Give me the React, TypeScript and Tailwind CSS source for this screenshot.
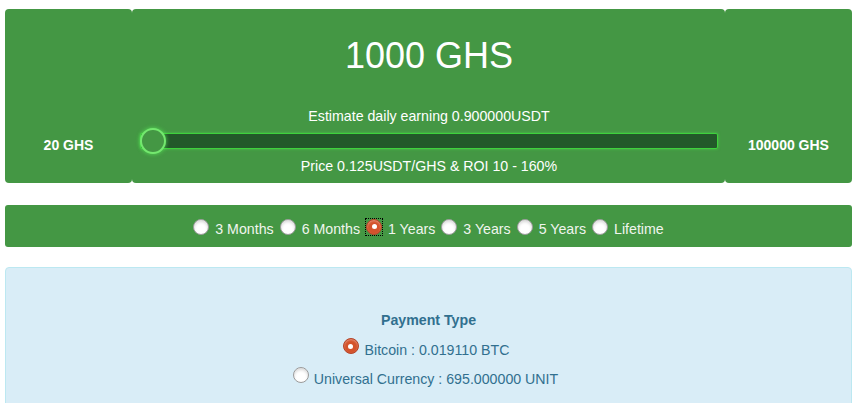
import React from 'react';

const periods = ['3 Months', '6 Months', '1 Years', '3 Years', '5 Years', 'Lifetime'];

const Radio = ({ checked, focus }: { checked?: boolean; focus?: boolean }) => (
  <span
    className={`inline-flex items-center justify-center shrink-0 ${
      focus ? 'outline-1 outline-dotted outline-black outline-offset-0' : ''
    }`}
  >
    {checked ? (
      <span className="w-[16px] h-[16px] rounded-full bg-[#d4532c] border border-[#b5452a] shadow-[inset_0_1px_2px_rgba(255,255,255,0.4)] flex items-center justify-center">
        <span className="w-[5px] h-[5px] rounded-full bg-white" />
      </span>
    ) : (
      <span className="w-[16px] h-[16px] rounded-full bg-white border border-[#9a9a9a] shadow-[inset_0_2px_3px_rgba(0,0,0,0.15)]" />
    )}
  </span>
);

export default function App() {
  return (
    <div className="w-[858px] h-[403px] overflow-hidden bg-white pl-[5px] pt-[9px] pr-[6px] font-['Liberation_Sans',Arial,sans-serif]">
      {/* Slider panel */}
      <div className="grid grid-cols-[127px_1fr_127px] h-[174px]">
        <div className="bg-[#449744] rounded-[4px] flex items-end justify-center pb-[31px]">
          <span className="text-white font-bold text-[14px] leading-none">20 GHS</span>
        </div>
        <div className="bg-[#449744] rounded-[4px] flex flex-col items-center pl-[8px] pr-[7px]">
          <div className="text-white text-[36px] leading-none mt-[29px]">1000 GHS</div>
          <div className="text-white text-[14.2px] leading-none mt-[35px]">Estimate daily earning 0.900000USDT</div>
          <div className="relative w-full mt-[5px] h-[26px] flex items-center">
            <div className="w-full h-[16px] bg-[#23592a] border border-[#3ed23c] rounded-[2px] shadow-[0_0_3px_rgba(80,230,80,0.6)]" />
            <div className="absolute left-0 top-0 w-[26px] h-[26px] rounded-full bg-[#449744] border-2 border-[#74e86f] shadow-[0_0_4px_rgba(90,240,90,0.8)]" />
          </div>
          <div className="text-white text-[14.2px] leading-none mt-[5px]">Price 0.125USDT/GHS &amp; ROI 10 - 160%</div>
        </div>
        <div className="bg-[#449744] rounded-[4px] flex items-end justify-center pb-[31px]">
          <span className="text-white font-bold text-[14px] leading-none">100000 GHS</span>
        </div>
      </div>

      {/* Period selector */}
      <div className="mt-[22px] h-[42px] bg-[#449744] rounded-[3px] flex items-center justify-center pt-[2px] pl-[6px]">
        {periods.map((p) => (
          <label key={p} className="flex items-center text-[#f0f5ee] text-[14.2px] leading-none">
            <Radio checked={p === '1 Years'} focus={p === '1 Years'} />
            <span className="ml-[6px] mr-[6px] mt-[5px]">{p}</span>
          </label>
        ))}
      </div>

      {/* Payment type */}
      <div className="mt-[20px] h-[200px] bg-[#d9edf7] border border-[#bce8f1] rounded-[4px] flex flex-col items-center text-[#31708f] text-[14.2px] leading-none">
        <div className="font-bold mt-[45px]">Payment Type</div>
        <label className="flex items-start mt-[11px] ml-[-5px]">
          <Radio checked />
          <span className="ml-[6px] mt-[5px]">Bitcoin : 0.019110 BTC</span>
        </label>
        <label className="flex items-start mt-[10px] ml-[-6px]">
          <Radio />
          <span className="ml-[5px] mt-[5px]">Universal Currency : 695.000000 UNIT</span>
        </label>
      </div>
    </div>
  );
}
